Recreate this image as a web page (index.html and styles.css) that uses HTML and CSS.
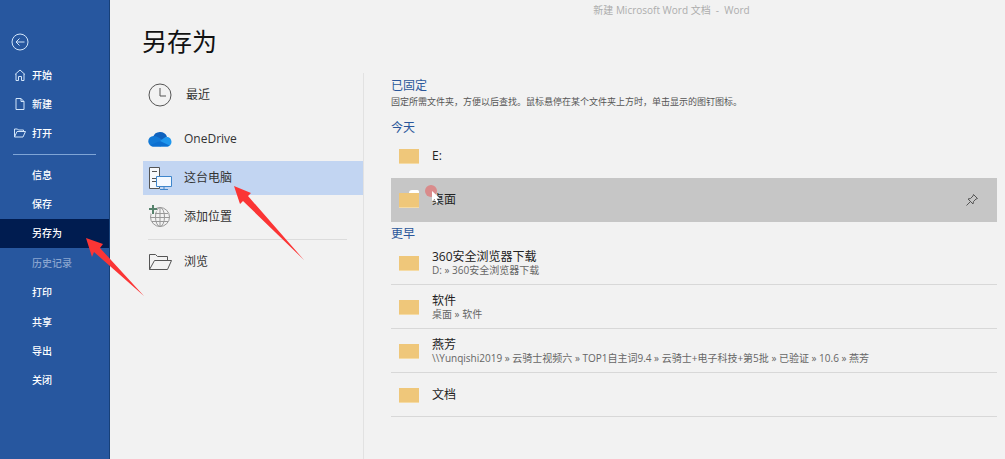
FILE: index.html
```html
<!DOCTYPE html>
<html lang="zh-CN">
<head>
<meta charset="utf-8">
<title>新建 Microsoft Word 文档 - Word</title>
<link rel="stylesheet" href="styles.css">
</head>
<body>
<div class="app">
  <nav class="sidebar">
    <button class="back" aria-label="返回">
      <svg width="18" height="18" viewBox="0 0 18 18"><circle cx="9" cy="9" r="8"/><path d="M13.500 9H5M8.500 5.500 5 9l3.500 3.500"/></svg>
    </button>
    <div class="nav-group nav-top">
      <button class="nav-item"><svg width="12" height="12" viewBox="0 0 12 12"><path d="M1 5.500 6 1l5 4.500M2 5v6.500h2.500V7.500h3v4H10V5"/></svg>开始</button>
      <button class="nav-item"><svg width="12" height="12" viewBox="0 0 12 12"><path d="M2 .5h5L10 3.500v8H2zM7 .5v3h3"/></svg>新建</button>
      <button class="nav-item"><svg width="12" height="12" viewBox="0 0 12 12"><path d="M.5 10V2h3l1 1h5v1.500M.5 10 3 4.500h8.500L9 10z"/></svg>打开</button>
    </div>
    <hr class="nav-rule">
    <div class="nav-group nav-main">
      <button class="nav-item">信息</button>
      <button class="nav-item">保存</button>
      <button class="nav-item active">另存为</button>
      <button class="nav-item" disabled>历史记录</button>
      <button class="nav-item">打印</button>
      <button class="nav-item">共享</button>
      <button class="nav-item">导出</button>
      <button class="nav-item">关闭</button>
    </div>
  </nav>
  <div class="page">
    <header class="titlebar">新建 Microsoft Word 文档&nbsp; -&nbsp; Word</header>
    <h1 class="heading">另存为</h1>
    <main class="content">
      <section class="places">
        <button class="place recent">
          <svg width="24" height="24" viewBox="0 0 24 24" fill="none" stroke="#555"><circle cx="12" cy="12" r="11"/><path d="M12 5v8h6"/></svg>最近</button>
        <button class="place">
          <svg width="24" height="24" viewBox="0 0 24 24"><path fill="#0f62be" d="M5 10a7.500 7.500 0 0 1 14-.5L14 14l-8-2z"/><path fill="#1279d6" d="M5.500 19.500A5.200 5.200 0 0 1 5.500 9c2.500 0 4 .8 6 2l6 4-5 4.500z"/><path fill="#1f97ee" d="M10 15.500 16 11c3-2.500 7.500-.5 7.500 4 0 2.500-2 4.500-4.500 4.500h-7z"/><path fill="#0c6fd0" d="M2.500 18 12 14l9.500 4.500c-1 .8-1.500 1-2.500 1H5.500c-1.200 0-2-.5-3-1.500z"/></svg>OneDrive</button>
        <button class="place selected">
          <svg width="24" height="24" viewBox="0 0 24 24" fill="none"><path fill="#f7f9fc" stroke="#555" d="M1.500 1.500h10v21h-10z"/><path stroke="#555" d="M4 5.500h5M4 12.500h4M4 15.500h4"/><path fill="#f4f9ff" stroke="#3f86cc" d="M8.500 10.500h15v10h-15z"/><path stroke="#3f86cc" d="M16 20.500v3M12 23.500h8"/></svg>这台电脑</button>
        <button class="place">
          <svg width="24" height="24" viewBox="0 0 24 24" fill="none" stroke="#999"><circle cx="12" cy="12" r="9.500"/><ellipse cx="12" cy="12" rx="4.500" ry="9.500"/><path d="M12 3v18M4 8.500h16M2.500 12.500h19M4 16.500h16"/><path stroke="#f2f2f2" stroke-width="4" d="M5 0v9M0 4.500h9"/><path stroke="#56826c" stroke-width="2" d="M5 0v9M1 4h8"/></svg>添加位置</button>
        <hr class="place-rule">
        <button class="place">
          <svg width="24" height="24" viewBox="0 0 24 24" fill="none" stroke="#555"><path d="M1.500 19.500v-15h6l2 2h10v4M1.500 19.500l5-9h17l-4 9z"/></svg>浏览</button>
      </section>
      <section class="folders">
        <h2>已固定</h2>
        <p class="hint">固定所需文件夹，方便以后查找。鼠标悬停在某个文件夹上方时，单击显示的图钉图标。</p>
        <h2 class="today">今天</h2>
        <div class="row plain"><i class="folder"></i><span class="name">E:</span></div>
        <div class="row hover">
          <i class="folder open"></i><span class="name">桌面</span>
          <button class="pin" aria-label="固定"><svg width="14" height="14" viewBox="0 0 14 14"><path d="m8.500 1.500 4 4-1.500.5-2.500 2.500-.5 2.500-5-5L5.500 5.500 8 3zM5.500 8.500l-4 4"/></svg></button>
          <svg class="pointer" width="20" height="22" viewBox="0 0 20 22"><circle cx="8" cy="7" r="6" fill="#d98b8b"/><path fill="#fff" d="M9 7v10l2.500-2 2 4 2-1-2-4h3z"/></svg>
        </div>
        <h2 class="earlier">更早</h2>
        <div class="row"><i class="folder"></i><div><div class="name">360安全浏览器下载</div><div class="path">D: » 360安全浏览器下载</div></div></div>
        <div class="row"><i class="folder"></i><div><div class="name">软件</div><div class="path">桌面 » 软件</div></div></div>
        <div class="row"><i class="folder"></i><div><div class="name">燕芳</div><div class="path">\\Yunqishi2019 » 云骑士视频六 » TOP1自主词9.4 » 云骑士+电子科技+第5批 » 已验证 » 10.6 » 燕芳</div></div></div>
        <div class="row"><i class="folder"></i><span class="name">文档</span></div>
      </section>
    </main>
  </div>
  <svg class="arrow arrow-nav" width="60" height="60" viewBox="0 0 60 60"><path d="M0 0 17 6l-3 4 44 48L8 14l-2 5z"/></svg>
  <svg class="arrow arrow-place" width="72" height="76" viewBox="0 0 72 76"><path d="m0 0 17 7-3 3 56 64L9 15l-3 3z"/></svg>
</div>
</body>
</html>
```
FILE: styles.css
```css
* { box-sizing: border-box; }
body {
  margin: 0;
  background: #f2f2f2;
  color: #333;
  font: 12px/16px "Open Sans", "Noto Sans CJK SC", sans-serif;
}
button {
  border: 0;
  padding: 0;
  background: none;
  color: inherit;
  font: inherit;
  text-align: left;
}
h1, h2, p { margin: 0; font-weight: 400; }
svg { flex: none; }

.app { position: relative; display: flex; min-height: 100vh; }

.sidebar {
  flex: 0 0 110px;
  padding-top: 33px;
  background: #27579f;
  border-right: 1px solid #174078;
  color: #fff;
}
.sidebar svg { fill: none; stroke: #d3e6fa; }
.back { display: block; height: 18px; margin: 0 0 9px 11px; }
.nav-group { display: grid; grid-auto-rows: 1fr; }
.nav-top { min-height: 88px; }
.nav-main { min-height: 235px; }
.nav-item {
  display: flex;
  align-items: center;
  gap: 6px;
  padding-left: 32px;
  font-size: 10px;
  font-weight: 500;
}
.nav-top .nav-item { padding-left: 14px; }
.nav-item.active { background: #001c50; }
.nav-item:disabled { color: #8aa5cf; }
.nav-rule, .place-rule { border: 0; height: 1px; }
.nav-rule { margin: 6px 13px 5px; background: #7fa5d6; }

.page { flex: 1; min-width: 0; display: flex; flex-direction: column; }
.titlebar {
  padding: 2px 0 0 228px;
  text-align: center;
  font-size: 10px;
  color: #adadad;
}
.heading {
  padding: 5px 0 0 32px;
  font-size: 25px;
  line-height: 36px;
  color: #111;
}
.content { flex: 1; display: flex; margin-top: 14px; }

.places {
  flex: 0 0 254px;
  display: flex;
  flex-direction: column;
  gap: 5px;
  padding: 5px 0 0 33px;
  border-right: 1px solid #e2e2e2;
}
.place {
  display: flex;
  align-items: center;
  gap: 12px;
  height: 34px;
  padding: 0 0 0 5px;
}
.place.recent { gap: 14px; margin-bottom: 5px; }
.place.selected { background: #c2d5f2; }
.place-rule { margin: 0 16px 0 5px; background: #dcdcdc; }

.folders { flex: 1; min-width: 0; padding: 5px 8px 0 27px; }
.folders h2 { font-size: 12px; line-height: 16px; color: #2b579a; }
.hint { font-size: 9px; color: #555; }
.folders .today { margin-top: 10px; }
.folders .earlier { margin: 4px 0 -1px; }
.row {
  position: relative;
  display: flex;
  align-items: center;
  gap: 13px;
  height: 44px;
  padding-left: 8px;
  border-bottom: 1px solid #d8d8d8;
}
.row.plain { border-color: transparent; margin-top: -2px; }
.row.hover { background: #c6c6c6; border-color: #c6c6c6; }
.name { line-height: 14px; color: #222; }
.path { font-size: 10px; line-height: 12px; color: #666; }
.folder {
  position: relative;
  flex: none;
  width: 20px;
  height: 15px;
  margin-top: 2px;
  background: #efc77a;
  border-bottom: 1px solid #f5dba5;
}
.folder.open::before {
  content: "";
  position: absolute;
  right: 0;
  top: -3px;
  width: 10px;
  height: 3px;
  border-radius: 4px 2px 0 0;
  background: #fff;
}
.pin { display: flex; margin: 0 18px 0 auto; }
.pin svg { fill: none; stroke: #555; }
.pointer { position: absolute; left: 32px; top: 6px; }

.arrow { position: absolute; fill: #fb3535; pointer-events: none; }
.arrow-nav { left: 86px; top: 238px; }
.arrow-place { left: 234px; top: 186px; }
```
